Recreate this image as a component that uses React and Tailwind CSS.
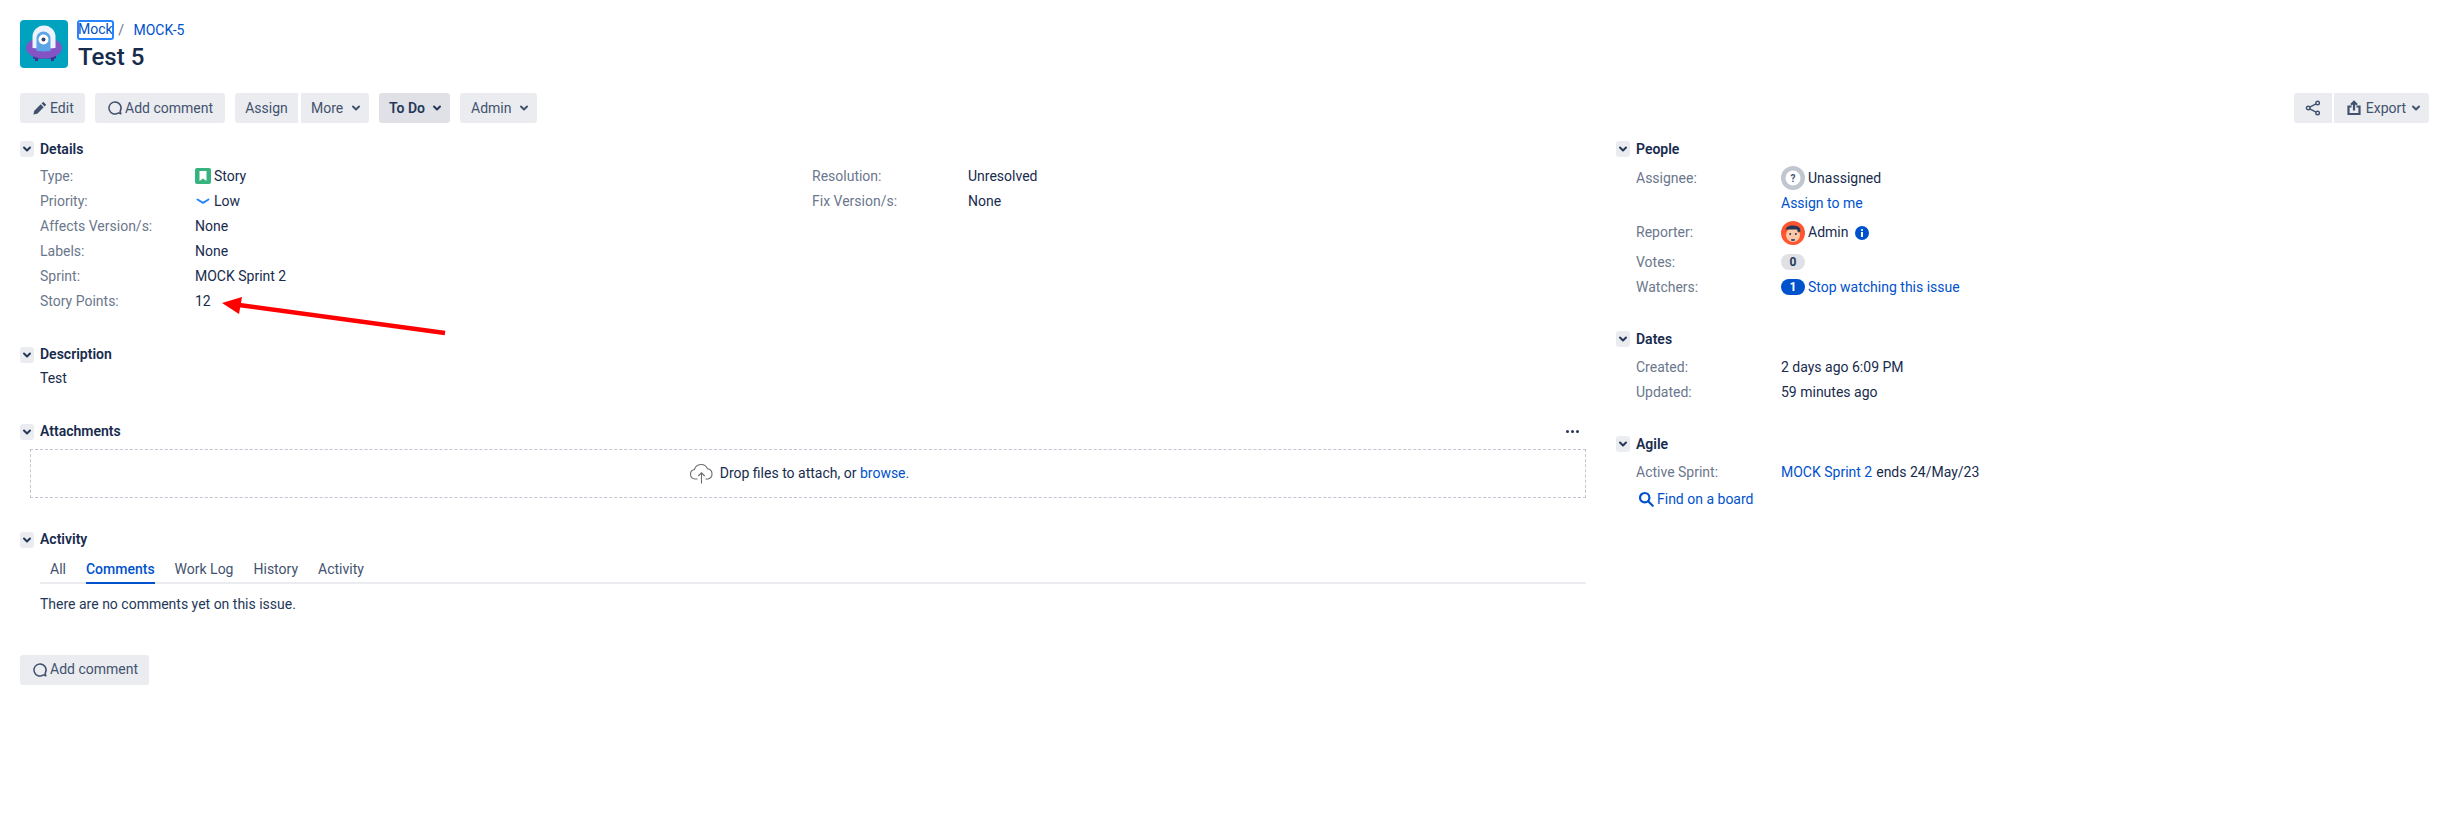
// App.jsx
const ChevronDown = ({ className = "size-3" }) => (
  <svg viewBox="0 0 12 12" className={className} fill="none" stroke="currentColor" strokeWidth="2" strokeLinecap="round" strokeLinejoin="round">
    <path d="M3 4.5l3 3 3-3" />
  </svg>
);

const LowPriorityIcon = () => (
  <svg viewBox="0 0 16 16" className="size-4 shrink-0" fill="none" stroke="#2684ff" strokeWidth="2" strokeLinecap="round" strokeLinejoin="round">
    <path d="M2.500 6.500L8 9.800l5.500-3.300" />
  </svg>
);

const CommentIcon = () => (
  <svg viewBox="0 0 16 16" className="size-[16px] shrink-0" fill="none" stroke="currentColor" strokeWidth="1.500">
    <path d="M8 2a6 6 0 1 0 3.400 10.900l2.400.9-.7-2.500A6 6 0 0 0 8 2z" strokeLinejoin="round" />
  </svg>
);

const PencilIcon = () => (
  <svg viewBox="0 0 16 16" className="size-[16px] shrink-0" fill="currentColor">
    <path d="M11.200 1.800l3 3-1.600 1.600-3-3zM8.700 4.300l3 3-6.400 6.400-3.900.9.9-3.900z" />
  </svg>
);

const ExportIcon = () => (
  <svg viewBox="0 0 16 16" className="size-[16px] shrink-0" fill="none" stroke="currentColor" strokeWidth="2.200">
    <path d="M5.500 6.500H2.500v7.500h11V6.500H10.500" />
    <path d="M8 10.500V2M5 4.800L8 1.800l3 3" />
  </svg>
);

const ShareIcon = () => (
  <svg viewBox="0 0 16 16" className="size-[16px]" fill="none" stroke="currentColor" strokeWidth="1.400">
    <circle cx="3.200" cy="8" r="1.800" />
    <circle cx="12.600" cy="3" r="1.800" />
    <circle cx="12.600" cy="13" r="1.800" />
    <path d="M4.800 7.100l6.200-3.300M4.800 8.900l6.200 3.300" />
  </svg>
);

const ProjectLogo = () => (
  <svg viewBox="0 0 48 48" className="size-12 shrink-0 rounded-[4px]">
    <rect width="48" height="48" fill="#00a3bf" />
    <rect x="15" y="33" width="3" height="8" fill="#403294" />
    <rect x="31" y="33" width="3" height="8" fill="#403294" />
    <rect x="13" y="36" width="23" height="2.500" fill="#403294" />
    <ellipse cx="24" cy="28" rx="18" ry="10.500" fill="#8453c4" />
    <path d="M12.500 28V17a11.500 11.500 0 0 1 23 0v11a24 6 0 0 1-23 0z" fill="#eef2fb" />
    <path d="M16.500 31V18.500a7 7 0 0 1 14 0V31a16 4 0 0 1-14 0z" fill="#5ba4e6" />
    <circle cx="23.500" cy="19.500" r="5" fill="#ffffff" />
    <circle cx="23.500" cy="19.500" r="2" fill="#344563" />
  </svg>
);

const StoryIcon = () => (
  <svg viewBox="0 0 16 16" className="size-4 shrink-0">
    <rect width="16" height="16" rx="2" fill="#36b37e" />
    <path d="M4.500 3h7v10L8 10.400 4.500 13z" fill="#ffffff" />
  </svg>
);

const UnassignedAvatar = () => (
  <svg viewBox="0 0 24 24" className="size-6 shrink-0">
    <circle cx="12" cy="12" r="12" fill="#c1c7d0" />
    <circle cx="12" cy="12" r="7.500" fill="#ffffff" />
    <text x="12" y="15.600" textAnchor="middle" fontSize="10" fontWeight="700" fill="#42526e" fontFamily="Roboto, sans-serif">?</text>
  </svg>
);

const AdminAvatar = () => (
  <svg viewBox="0 0 24 24" className="size-6 shrink-0">
    <circle cx="12" cy="12" r="12" fill="#ff5630" />
    <ellipse cx="12" cy="14" rx="7" ry="7" fill="#ffc9a8" />
    <path d="M4.500 10c0-4 3-5.500 7.500-5.500 3.500 0 6 1 7 3l.5 3-2.500 1-1-3H5z" fill="#253858" />
    <circle cx="9.200" cy="13" r="1" fill="#253858" />
    <circle cx="14.800" cy="13" r="1" fill="#253858" />
    <path d="M10 18h4l-.5 2h-3z" fill="#42526e" />
  </svg>
);

const InfoIcon = () => (
  <svg viewBox="0 0 14 14" className="size-[14px] ml-[7px] shrink-0">
    <circle cx="7" cy="7" r="7" fill="#0052cc" />
    <rect x="6" y="6" width="2" height="5" fill="#ffffff" />
    <circle cx="7" cy="4" r="1.100" fill="#ffffff" />
  </svg>
);

const SearchIcon = () => (
  <svg viewBox="0 0 16 16" className="size-[16px] shrink-0" fill="none" stroke="#0052cc" strokeWidth="2.200">
    <circle cx="6.700" cy="6.700" r="4.700" />
    <path d="M10.200 10.200l4.500 4.500" strokeLinecap="round" />
  </svg>
);

const CloudIcon = () => (
  <svg viewBox="0 0 25 21" className="w-[25px] h-[21px] shrink-0" fill="none" stroke="#6b6b6b" strokeWidth="1.100">
    <path d="M8.500 16H6a4.800 4.800 0 0 1-.6-9.500A7 7 0 0 1 18.600 5.800 5.200 5.200 0 0 1 19 16h-2.500" strokeLinejoin="round" />
    <path d="M12.500 20.500V10M9.300 13l3.200-3.200 3.200 3.200" />
  </svg>
);

function Btn({ children, className = "", strong }) {
  return (
    <button
      className={`h-[30px] flex items-center rounded-[3px] text-[14px] ${strong ? "bg-[#dfe1e6] font-semibold text-[#253858]" : "bg-[#ebecf0] text-[#42526e]"} ${className}`}
    >
      {children}
    </button>
  );
}

function SectionHeader({ title, action }) {
  return (
    <div className="h-5 flex items-center">
      <span className="w-[14px] h-4 rounded-[3px] bg-[#ebecf0] text-[#253858] flex items-center justify-center">
        <ChevronDown />
      </span>
      <h2 className="ml-[6px] text-[14px] font-semibold text-[#172b4d]">{title}</h2>
      {action}
    </div>
  );
}

function Row({ label, children }) {
  return (
    <div className="h-[25px] flex items-center pl-5">
      <span className="w-[155px] shrink-0 text-[#6b778c]">{label}</span>
      <div className="flex items-center">{children}</div>
    </div>
  );
}

function SideRow({ label, children, className = "h-[25px]" }) {
  return (
    <div className={`flex items-center pl-5 ${className}`}>
      <span className="w-[145px] shrink-0 text-[#6b778c]">{label}</span>
      <div className="flex items-center">{children}</div>
    </div>
  );
}

const tabs = ["All", "Comments", "Work Log", "History", "Activity"];

export default function App() {
  return (
    <div className="relative min-h-screen bg-white px-5 pt-5 text-[14px] text-[#172b4d] font-['Roboto',sans-serif]">
      {/* Cabecera */}
      <header className="flex gap-2 h-12">
        <ProjectLogo />
        <div className="pl-[2px]">
          <div className="h-5 flex items-center text-[#0052cc]">
            <a className="ml-[-1.500px] px-[1.500px] h-5 leading-[19px] rounded-[3px] outline-2 outline-offset-[-2px] outline-[#2684ff]">Mock</a>
            <span className="ml-[4px] text-[#6b778c]">/</span>
            <a className="ml-[9.500px]">MOCK-5</a>
          </div>
          <h1 className="mt-[3px] text-[24px] leading-7 font-medium">Test 5</h1>
        </div>
      </header>

      {/* Toolbar */}
      <div className="mt-[25px] mr-[14px] flex items-center">
        <Btn className="w-[65px] pl-3 gap-[2px]"><PencilIcon />Edit</Btn>
        <Btn className="ml-[10px] w-[130px] pl-3 gap-[2px]"><CommentIcon />Add comment</Btn>
        <Btn className="ml-[10px] w-[63px] justify-center rounded-r-none">Assign</Btn>
        <Btn className="ml-[3px] w-[68px] pl-[10px] pr-[7px] justify-between rounded-l-none">More<ChevronDown /></Btn>
        <Btn strong className="ml-[10px] w-[71px] pl-[10px] pr-[7px] justify-between">To Do<ChevronDown /></Btn>
        <Btn className="ml-[10px] w-[77px] pl-[11px] pr-[7px] justify-between">Admin<ChevronDown /></Btn>
        <Btn className="ml-auto w-[38px] justify-center rounded-r-none"><ShareIcon /></Btn>
        <Btn className="ml-[2px] w-[95px] pl-3 pr-[7px] justify-between rounded-l-none"><ExportIcon /><span>Export</span><ChevronDown /></Btn>
      </div>

      <div className="mt-4 grid grid-cols-[1566px_1fr] gap-[30px]">
        {/* Columna principal */}
        <main>
          <SectionHeader title="Details" />
          <div className="mt-[4.500px] flex">
            <div className="w-[792px]">
              <Row label="Type:"><StoryIcon /><span className="ml-[3px]">Story</span></Row>
              <Row label="Priority:">
                <LowPriorityIcon />
                <span className="ml-[3px]">Low</span>
              </Row>
              <Row label="Affects Version/s:">None</Row>
              <Row label="Labels:">None</Row>
              <Row label="Sprint:">MOCK Sprint 2</Row>
              <Row label="Story Points:">12</Row>
            </div>
            <div>
              <div className="h-[25px] flex items-center">
                <span className="w-[156px] text-[#6b778c]">Resolution:</span>Unresolved
              </div>
              <div className="h-[25px] flex items-center">
                <span className="w-[156px] text-[#6b778c]">Fix Version/s:</span>None
              </div>
            </div>
          </div>

          <div className="mt-[31px]">
            <SectionHeader title="Description" />
            <p className="mt-[1.500px] h-[25px] leading-[25px] pl-5">Test</p>
          </div>

          <div className="mt-[30.500px]">
            <SectionHeader
              title="Attachments"
              action={
                <span className="ml-auto mr-[7px] flex gap-[2px]">
                  <i className="size-[3px] rounded-full bg-[#253858]" />
                  <i className="size-[3px] rounded-full bg-[#253858]" />
                  <i className="size-[3px] rounded-full bg-[#253858]" />
                </span>
              }
            />
            <div className="mt-[7px] ml-[10px] h-[49px] border border-dashed border-[#c1c7d0] flex items-center justify-center gap-[6px] pr-[18px]">
              <CloudIcon />
              <span>Drop files to attach, or <a className="text-[#0052cc]">browse.</a></span>
            </div>
          </div>

          <div className="mt-8">
            <SectionHeader title="Activity" />
            <div className="ml-5 mt-[7px] h-[27px] flex gap-5 pl-[10px] border-b-2 border-[#ebecf0]">
              {tabs.map((t) => (
                <span
                  key={t}
                  className={`h-[27px] leading-[24px] border-b-2 ${t === "Comments" ? "border-[#0052cc] text-[#0052cc] font-medium" : "border-transparent text-[#42526e]"}`}
                >
                  {t}
                </span>
              ))}
            </div>
            <p className="mt-[10px] pl-5 h-5 leading-5 text-[#253858]">There are no comments yet on this issue.</p>
          </div>

          <Btn className="mt-[41px] w-[129px] pl-3 gap-[2px]"><CommentIcon />Add comment</Btn>
        </main>

        {/* Columna lateral */}
        <aside>
          <SectionHeader title="People" />
          <div className="mt-[6.500px]">
            <SideRow label="Assignee:"><UnassignedAvatar /><span className="ml-[3px]">Unassigned</span></SideRow>
            <div className="h-[25px] pl-[165px] flex items-center text-[#0052cc]">Assign to me</div>
            <SideRow label="Reporter:" className="h-[34px]"><AdminAvatar /><span className="ml-[3px]">Admin</span><InfoIcon /></SideRow>
            <SideRow label="Votes:">
              <span className="w-6 h-4 rounded-full bg-[#dfe1e6] text-[#253858] text-[12px] leading-4 font-bold text-center">0</span>
            </SideRow>
            <SideRow label="Watchers:">
              <span className="w-6 h-4 rounded-full bg-[#0052cc] text-white text-[12px] leading-4 font-bold text-center">1</span>
              <a className="ml-[3px] text-[#0052cc]">Stop watching this issue</a>
            </SideRow>
          </div>

          <div className="mt-[29.500px]">
            <SectionHeader title="Dates" />
            <div className="mt-[5.500px]">
              <SideRow label="Created:">2 days ago 6:09 PM</SideRow>
              <SideRow label="Updated:">59 minutes ago</SideRow>
            </div>
          </div>

          <div className="mt-[29.500px]">
            <SectionHeader title="Agile" />
            <div className="mt-[5.500px]">
              <SideRow label="Active Sprint:">
                <a className="text-[#0052cc]">MOCK Sprint 2</a>
                <span className="ml-[4px]">ends 24/May/23</span>
              </SideRow>
              <div className="mt-[2px] pl-[22px] h-[25px] flex items-center gap-[3px] text-[#0052cc]">
                <SearchIcon />Find on a board
              </div>
            </div>
          </div>
        </aside>
      </div>

      {/* Anotación: flecha roja */}
      <svg className="absolute left-[215px] top-[290px] pointer-events-none" width="240" height="50" viewBox="0 0 240 50">
        <path d="M230 43L24 15" stroke="#ff0000" strokeWidth="4.500" />
        <path d="M7 13L27 7 24 24z" fill="#ff0000" />
      </svg>
    </div>
  );
}
